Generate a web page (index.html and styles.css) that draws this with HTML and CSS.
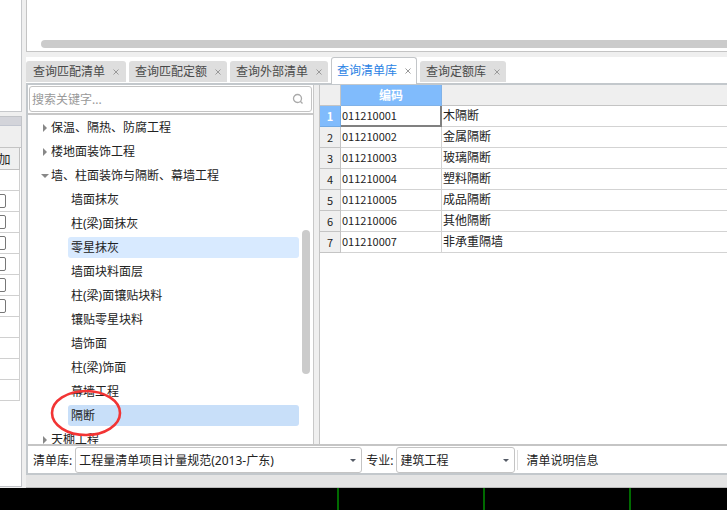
FILE: index.html
```html
<!DOCTYPE html>
<html lang="zh-CN">
<head>
<meta charset="utf-8">
<title>查询清单库</title>
<link rel="stylesheet" href="styles.css">
</head>
<body>
<div class="workspace">
  <aside class="side">
    <div class="side-blank"></div>
    <div class="side-panel">
      <div class="side-title"></div>
      <div class="side-tools"></div>
      <table class="side-table">
        <thead><tr><th>加</th></tr></thead>
        <tbody>
          <tr><td></td></tr>
          <tr><td><input type="checkbox" aria-label="第1行"></td></tr>
          <tr><td><input type="checkbox" aria-label="第2行"></td></tr>
          <tr><td><input type="checkbox" aria-label="第3行"></td></tr>
          <tr><td><input type="checkbox" aria-label="第4行"></td></tr>
          <tr><td><input type="checkbox" aria-label="第5行"></td></tr>
          <tr><td><input type="checkbox" aria-label="第6行"></td></tr>
          <tr><td></td></tr>
          <tr><td></td></tr>
          <tr><td></td></tr>
          <tr><td></td></tr>
        </tbody>
      </table>
    </div>
  </aside>

  <main class="main">
    <div class="upper"><div class="hbar"></div></div>

    <nav class="tabs">
      <button class="tab" type="button">查询匹配清单<svg class="close" viewBox="0 0 6 6"><path d="M.5 .5l5 5M5.5 .5l-5 5"/></svg></button>
      <button class="tab" type="button">查询匹配定额<svg class="close" viewBox="0 0 6 6"><path d="M.5 .5l5 5M5.5 .5l-5 5"/></svg></button>
      <button class="tab" type="button">查询外部清单<svg class="close" viewBox="0 0 6 6"><path d="M.5 .5l5 5M5.5 .5l-5 5"/></svg></button>
      <button class="tab tab-active" type="button">查询清单库<svg class="close" viewBox="0 0 6 6"><path d="M.5 .5l5 5M5.5 .5l-5 5"/></svg></button>
      <button class="tab" type="button">查询定额库<svg class="close" viewBox="0 0 6 6"><path d="M.5 .5l5 5M5.5 .5l-5 5"/></svg></button>
    </nav>

    <section class="query">
      <div class="split">
        <div class="browser">
          <div class="search-row">
            <div class="search">
              <input type="text" aria-label="搜索关键字" placeholder="搜索关键字...">
              <svg class="lens" viewBox="0 0 12 12"><circle cx="5.5" cy="5.5" r="4"/><path d="M8.3 8.3l2.2 2.2"/></svg>
            </div>
          </div>
          <div class="tree-box">
            <ul class="tree">
              <li><button class="node" type="button"><i class="caret"></i>保温、隔热、防腐工程</button></li>
              <li><button class="node" type="button"><i class="caret"></i>楼地面装饰工程</button></li>
              <li><button class="node" type="button"><i class="caret caret-open"></i>墙、柱面装饰与隔断、幕墙工程</button>
                <ul class="leaves">
                  <li><button class="leaf" type="button">墙面抹灰</button></li>
                  <li><button class="leaf" type="button">柱(梁)面抹灰</button></li>
                  <li><button class="leaf leaf-hover" type="button">零星抹灰</button></li>
                  <li><button class="leaf" type="button">墙面块料面层</button></li>
                  <li><button class="leaf" type="button">柱(梁)面镶贴块料</button></li>
                  <li><button class="leaf" type="button">镶贴零星块料</button></li>
                  <li><button class="leaf" type="button">墙饰面</button></li>
                  <li><button class="leaf" type="button">柱(梁)饰面</button></li>
                  <li><button class="leaf" type="button">幕墙工程</button></li>
                  <li class="marked"><button class="leaf leaf-selected" type="button">隔断</button>
                    <svg class="ring" viewBox="0 0 72 48"><ellipse cx="36" cy="24" rx="34" ry="22"/></svg></li>
                </ul>
              </li>
              <li><button class="node" type="button"><i class="caret"></i>天棚工程</button></li>
            </ul>
            <div class="vbar"></div>
          </div>
        </div>
        <div class="splitter"></div>
        <div class="results">
          <table class="grid">
            <colgroup><col class="col-no"><col class="col-code"><col></colgroup>
            <thead><tr><th></th><th class="head-active">编码</th><th></th></tr></thead>
            <tbody>
              <tr><th class="no-active">1</th><td class="code cell-active">011210001</td><td>木隔断</td></tr>
              <tr><th>2</th><td class="code">011210002</td><td>金属隔断</td></tr>
              <tr><th>3</th><td class="code">011210003</td><td>玻璃隔断</td></tr>
              <tr><th>4</th><td class="code">011210004</td><td>塑料隔断</td></tr>
              <tr><th>5</th><td class="code">011210005</td><td>成品隔断</td></tr>
              <tr><th>6</th><td class="code">011210006</td><td>其他隔断</td></tr>
              <tr><th>7</th><td class="code">011210007</td><td>非承重隔墙</td></tr>
            </tbody>
          </table>
        </div>
      </div>
      <div class="filters">
        <label for="library">清单库:</label>
        <div class="pick pick-library"><select id="library"><option>工程量清单项目计量规范(2013-广东)</option></select></div>
        <label for="major">专业:</label>
        <div class="pick pick-major"><select id="major"><option>建筑工程</option></select></div>
        <span class="info">清单说明信息</span>
      </div>
    </section>
    <div class="gutter"></div>
  </main>
</div>
<div class="canvas"><i></i><i></i><i></i></div>
</body>
</html>
```
FILE: styles.css
```css
* { box-sizing: border-box; }
body {
  margin: 0;
  height: 100vh;
  display: flex;
  flex-direction: column;
  overflow: hidden;
  background: #efefef;
  color: #222;
  font: 12px/16px "Noto Sans", "Noto Sans CJK SC", sans-serif;
}
button, input, select { font: inherit; color: inherit; }
button { border: 0; background: none; margin: 0; padding: 0; text-align: left; }
ul { list-style: none; margin: 0; padding: 0; }
table { border-collapse: separate; border-spacing: 0; }

.workspace { flex: 1; min-height: 0; display: flex; gap: 4px; }

/* left strip */
.side { width: 22px; display: flex; flex-direction: column; gap: 4px; overflow: hidden; }
.side-blank { height: 112px; background: #fff; border: solid #c6c8cb; border-width: 0 1px 1px 0; }
.side-panel { flex: 1; background: #fff; border: solid #c2c4c8; border-width: 1px 1px 1px 0; margin-bottom: 1px; }
.side-title { height: 9px; background: #d3d4da; border-bottom: 1px solid #c2c6d0; }
.side-tools { height: 22px; background: #efefef; border-bottom: 1px solid #c4c4c4; }
/* the column runs on past the left edge of the strip */
.side-table { width: 30px; margin-left: -10px; table-layout: fixed; }
.side-table th, .side-table td {
  height: 21px; padding: 0; overflow: hidden; line-height: 14px;
  border: solid #d0d0d0; border-width: 0 1px 1px 0;
}
.side-table th { height: 22px; padding-top: 2px; background: #efefef; font-weight: 400; border-color: #c0c0c0; }
.side-table input {
  appearance: none; display: block; width: 14px; height: 14px; margin: 0 0 0 2px;
  border: 1px solid #777; border-radius: 2px; background: #fff;
}

/* right side */
.main { flex: 1; min-width: 0; display: flex; flex-direction: column; }
.upper {
  height: 52px; display: flex; flex-direction: column; justify-content: flex-end;
  background: #fff; border: solid #c4c4c4; border-width: 0 0 1px 1px; padding: 0 0 3px 14px;
}
.hbar { height: 8px; background: #cbcbcb; border-radius: 4px 0 0 4px; }

.tabs { display: flex; align-items: flex-end; gap: 3px; height: 26px; margin-top: 5px; background: #fff; }
.tab {
  display: flex; align-items: center; gap: 8px; height: 21px; margin-bottom: 1px; padding: 0 6px;
  background: #dedede; color: #4a4a4a; border-radius: 3px 3px 0 0;
}
.tab:first-child { padding: 0 7px; }
.tab-active {
  position: relative; height: 27px; margin-bottom: -1px; padding: 0 5px;
  background: #fff; color: #2a82e4; border: 1px solid #c3c6c9; border-bottom: 0;
}
.close { width: 6px; height: 6px; stroke: #999; fill: none; }

.query {
  flex: 1; min-height: 0; display: flex; flex-direction: column;
  background: #fff; border: solid #c3c8cc; border-width: 2px 0 2px 2px;
}
.split { flex: 1; min-height: 0; display: flex; border-bottom: 2px solid #c5c5c5; }
.browser { width: 286px; display: flex; flex-direction: column; border-right: 1px solid #c8c8c8; }
.search-row { padding: 1px; border-bottom: 2px solid #c8c8c8; }
.search {
  display: flex; align-items: center; height: 26px; padding: 0 7px 0 2px;
  border: 1px solid #c4c4c4; border-radius: 3px;
}
.search input { flex: 1; min-width: 0; border: 0; padding: 2px 0 0; outline: 0; background: none; }
.search input::placeholder { color: #999; }
.lens { width: 12px; height: 12px; fill: none; stroke: #aaa; stroke-width: 1.3; }

.tree-box { position: relative; flex: 1; min-height: 0; overflow: hidden; padding-right: 14px; }
.node { display: flex; align-items: center; width: 100%; height: 24px; padding: 2px 0 0 13px; }
.caret { flex: none; width: 10px; height: 0; }
.caret::before {
  content: ""; display: block; width: 0; margin: -4px 0 0 2px;
  border: solid transparent; border-width: 4px 0 4px 4px; border-left-color: #888;
}
.caret-open::before { margin: -2px 0 0 0; border-width: 4px 4px 0 4px; border-color: #888 transparent transparent; }
.leaves li { padding: 2px 0 1px 40px; }
.leaf { display: block; width: 100%; height: 21px; padding-left: 3px; border-radius: 3px; }
.leaf-hover { background: #d8eaff; }
.leaf-selected { background: #c8dff9; }
.marked { position: relative; }
.ring { position: absolute; left: 22px; top: -14px; width: 72px; height: 48px; fill: none; stroke: #f23434; stroke-width: 2.6; z-index: 1; }
.vbar { position: absolute; right: 3px; top: 35%; width: 8px; height: 144px; border-radius: 4px; background: #cbcbcb; }

.splitter { width: 5px; background: #efefef; }
.results { flex: 1; min-width: 0; border-left: 1px solid #c4c4c4; }
.grid { width: 100%; table-layout: fixed; }
.col-no { width: 21px; }
.col-code { width: 101px; }
.grid th, .grid td { height: 21px; line-height: 16px; border: solid #d3d3d3; border-width: 0 1px 1px 0; }
.grid td { padding: 0 2px 2px 1px; font-family: "Noto Sans CJK SC", sans-serif; white-space: nowrap; }
.grid th { padding: 0; background: #efefef; font: 11px/16px "Noto Sans CJK SC", sans-serif; border-color: #c4c4c4; }
.grid tr > :last-child { border-right: 0; }
.grid thead .head-active { background: #80bbfc; color: #fff; border-color: #80b2e8; font-size: 12px; font-weight: 700; }
.grid tbody .no-active { background: #80bbfc; color: #fff; border-color: #70a9e4; font-weight: 700; }
.grid .code { font-size: 11px; }
.grid .cell-active { box-shadow: inset -1px -1px #808080; border-color: #808080; }

.filters { display: flex; align-items: center; height: 27px; padding-left: 5px; }
.filters label, .info { padding-top: 2px; }
.pick { position: relative; margin: 0 4px 0 3px; }
.pick::after {
  content: ""; position: absolute; right: 6px; top: 12px;
  border: solid transparent; border-width: 3px 3px 0; border-top-color: #555b66; pointer-events: none;
}
.pick select {
  appearance: none; display: block; width: 100%; height: 26px; padding: 2px 16px 0 3px;
  background: #fff; border: 1px solid #c4c4c4; border-radius: 3px;
}
.pick-library { flex: 0 0 287px; }
.pick-major { flex: 0 0 119px; margin-right: 2px; }
.info { padding-left: 8px; border-left: 1px solid #dcdcdc; line-height: 18px; }
.gutter { height: 13px; background: #e4e4e4; border-bottom: 1px solid #bbb; }

/* drawing area below the dialog */
.canvas { display: flex; gap: 144px; height: 22px; padding-left: 337px; background: #000; }
.canvas i { flex: none; width: 2px; background: #006a00; }
```
